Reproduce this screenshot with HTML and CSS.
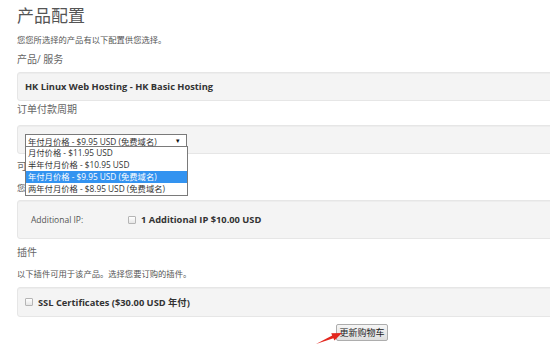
FILE: index.html
```html
<html>
  <head>
    <meta charset="UTF-8" />
    <meta name="viewport" content="width=device-width, initial-scale=1.0" />
    <title>产品配置</title>
    <link rel="stylesheet" href="styles.css">
  </head>

  <body>
    <div class="page">
      <h1 class="title">产品配置</h1>
      <div class="intro">您您所选择的产品有以下配置供您选择。</div>

      <div class="label">产品/ 服务</div>
      <div class="well well-product">HK Linux Web Hosting - HK Basic Hosting</div>

      <div class="label label-cycle">订单付款周期</div>
      <div class="well well-cycle">
        <div class="select">
          <span class="select-value">年付月价格 - $9.95 USD (免费域名)</span>
          <span class="select-caret">▾</span>
          <ul class="select-menu">
            <li>月付价格 - $11.95 USD</li>
            <li>半年付月价格 - $10.95 USD</li>
            <li class="selected">年付月价格 - $9.95 USD (免费域名)</li>
            <li>两年付月价格 - $8.95 USD (免费域名)</li>
          </ul>
        </div>
      </div>

      <div class="label label-options">可配置选项</div>
      <div class="intro intro-options">您所选择的产品/服务有以下可配置选项供选择</div>
      <div class="well well-options">
        <div class="field-name">Additional IP:</div>
        <label class="check"><span class="checkbox"></span>1 Additional IP $10.00 USD</label>
      </div>

      <div class="label label-addons">插件</div>
      <div class="intro intro-addons">以下插件可用于该产品。选择您要订购的插件。</div>
      <div class="well well-addons">
        <label class="check"><span class="checkbox"></span>SSL Certificates ($30.00 USD 年付)</label>
      </div>

      <div class="actions">
        <button class="btn">更新购物车</button>
      </div>
    </div>

    <svg class="arrow" width="34" height="20" viewBox="0 0 34 20">
      <polygon points="4,16 20.2,7.5 19.2,5.2 30,5 22.4,12.6 21.4,10.3" fill="#e3261d" />
    </svg>
  </body>
</html>
```

FILE: styles.css
```css
body {
  margin: 0;
  background-color: #fff;
  overflow: hidden;
  font-family: "Open Sans", "Noto Sans CJK SC", sans-serif;
  color: #555;
}

.page {
  width: 690px;
  padding-left: 17px;
}

.title {
  margin: 6px 0 0 0;
  height: 20px;
  line-height: 20px;
  font-size: 17px;
  font-weight: normal;
  color: #555;
}

.intro {
  margin-top: 8px;
  height: 12px;
  line-height: 12px;
  font-size: 8.3px;
  color: #555;
}

.label {
  margin-top: 6px;
  height: 14px;
  line-height: 14px;
  font-size: 10px;
  color: #666;
}

.label-cycle {
  margin-top: 1px;
}

.label-options {
  margin-top: 5px;
}

.label-addons {
  margin-top: 6px;
}

.intro-options {
  margin-top: 9px;
}

.intro-addons {
  margin-top: 9px;
}

.well {
  box-sizing: border-box;
  display: flex;
  align-items: center;
  background-color: #f4f4f4;
  border: 1px solid #e6e6e6;
  border-radius: 3px;
  box-shadow: inset 0 1px 1px rgba(0, 0, 0, 0.03);
  font-size: 9.3px;
  font-weight: bold;
  color: #333;
}

.well-product {
  margin-top: 6px;
  height: 29px;
  padding-left: 7px;
}

.well-cycle {
  margin-top: 9px;
  height: 29px;
  padding-left: 7px;
  align-items: flex-start;
  padding-top: 8px;
}

.well-options {
  margin-top: 6px;
  height: 39px;
  padding-left: 13px;
}

.well-addons {
  margin-top: 7px;
  height: 30px;
  padding-left: 7px;
}

.select {
  position: relative;
  box-sizing: border-box;
  width: 162px;
  height: 13px;
  display: flex;
  align-items: center;
  justify-content: space-between;
  padding: 0 6px 0 2px;
  background-color: #fff;
  border: 1px solid #7a7a7a;
  font-size: 8.3px;
  font-weight: normal;
  color: #333;
}

.select-caret {
  font-size: 7px;
  color: #111;
}

.select-menu {
  position: absolute;
  top: 11px;
  left: -1px;
  width: 161px;
  margin: 0;
  padding: 0;
  list-style: none;
  background-color: #fff;
  border: 1px solid #7a7a7a;
  z-index: 2;
}

.select-menu li {
  height: 12px;
  line-height: 12px;
  padding-left: 2px;
  font-size: 8.3px;
  color: #333;
  white-space: nowrap;
}

.select-menu li.selected {
  background-color: #3393f0;
  color: #fff;
}

.field-name {
  width: 97px;
  font-size: 8.5px;
  font-weight: normal;
  color: #555;
}

.check {
  display: flex;
  align-items: center;
}

.checkbox {
  display: inline-block;
  width: 6px;
  height: 6px;
  margin-right: 5px;
  border: 1px solid #b5b5b5;
  border-radius: 1px;
  background: linear-gradient(#fff, #e6e6e6);
}

.actions {
  margin-top: 7px;
  padding-left: 319px;
}

.btn {
  box-sizing: border-box;
  height: 17px;
  width: 52px;
  padding: 0;
  font-family: "Noto Sans CJK SC", sans-serif;
  font-size: 9px;
  color: #222;
  background: linear-gradient(#f6f6f6, #dedede);
  border: 1px solid #adadad;
  border-radius: 2px;
}

.arrow {
  position: absolute;
  left: 312px;
  top: 328px;
}
```
